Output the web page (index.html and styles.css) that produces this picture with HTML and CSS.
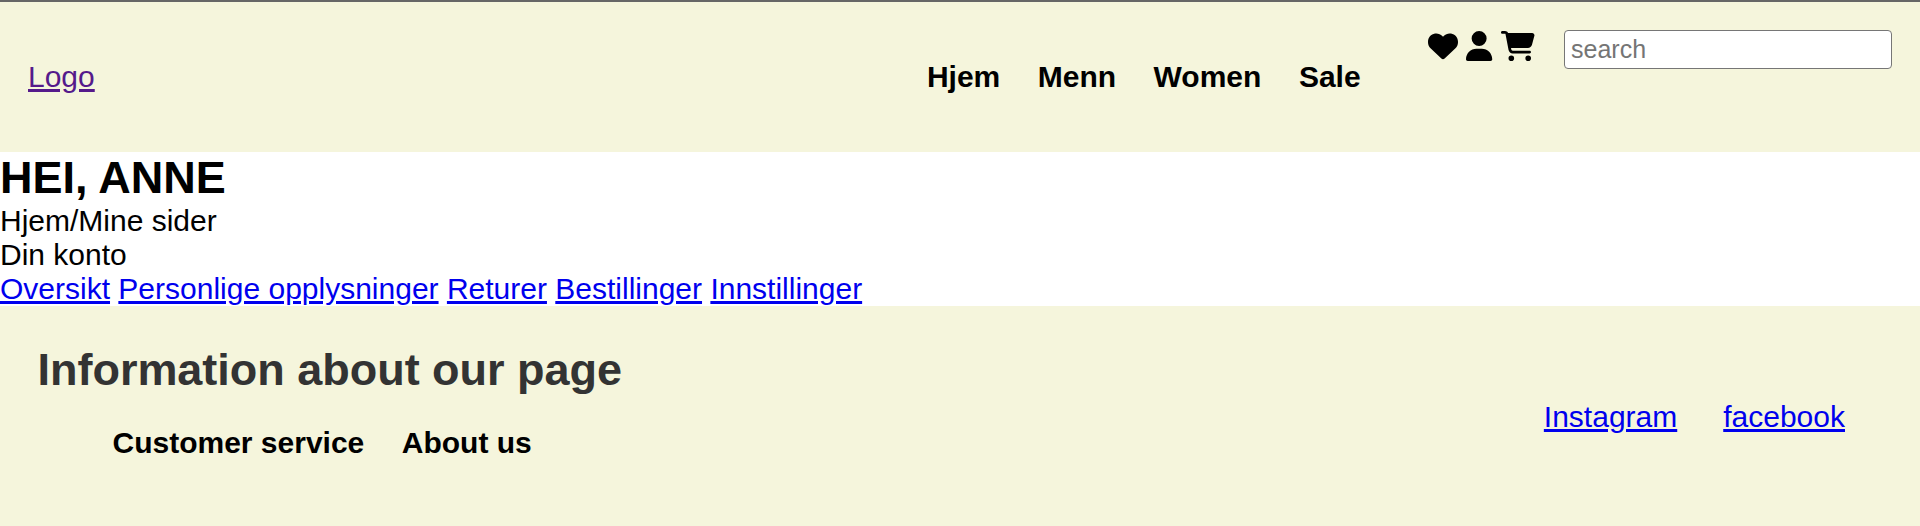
FILE: index.html
```html
<!DOCTYPE html>
<html lang="no">
<head>
<meta charset="utf-8">
<title>Mine sider</title>
<link rel="stylesheet" href="styles.css">
</head>
<body>
<header class="header">
  <a class="logo" href="#">Logo</a>
  <nav class="menu"><a>Hjem</a><a>Menn</a><a>Women</a><a>Sale</a></nav>
  <div class="icons">
    <svg width="30" height="30" viewBox="0 0 512 512"><path d="M47.600 300.400L228.300 469.100c7.500 7 17.400 10.900 27.700 10.900s20.200-3.900 27.700-10.900L464.400 300.400c30.400-28.300 47.600-68 47.600-109.500v-5.800c0-69.900-50.500-129.500-119.400-141C347 36.500 300.600 51.400 268 84L256 96 244 84c-32.600-32.600-79-47.500-124.600-39.900C50.500 55.600 0 115.200 0 185.100v5.800c0 41.500 17.200 81.200 47.600 109.500z"/></svg>
    <svg width="26.250" height="30" viewBox="0 0 448 512"><path d="M224 256A128 128 0 1 0 224 0a128 128 0 1 0 0 256zm-45.700 48C79.800 304 0 383.800 0 482.300 0 498.700 13.300 512 29.700 512h388.600c16.400 0 29.700-13.300 29.700-29.700C448 383.800 368.200 304 269.700 304h-91.400z"/></svg>
    <svg width="33.750" height="30" viewBox="0 0 576 512"><path d="M0 24C0 10.700 10.700 0 24 0h45.500c22 0 41.500 12.800 50.600 32h411c26.300 0 45.500 25 38.600 50.400l-41 152.300c-8.500 31.400-37 53.300-69.500 53.300H170.700l5.400 28.500c2.200 11.300 12.100 19.500 23.600 19.500H488c13.300 0 24 10.700 24 24s-10.700 24-24 24H199.700c-34.600 0-64.300-24.600-70.700-58.500L77.400 54.500C76.700 50.700 73.400 48 69.500 48H24C10.700 48 0 37.300 0 24zm128 440a48 48 0 1 1 96 0 48 48 0 1 1-96 0zm336-48a48 48 0 1 1 0 96 48 48 0 1 1 0-96z"/></svg>
  </div>
  <input class="search" type="text" placeholder="search">
</header>
<main class="account">
  <h1 class="greeting">HEI, ANNE</h1>
  <p>Hjem/Mine sider</p>
  <p>Din konto</p>
  <nav><a href="#">Oversikt</a> <a href="#">Personlige opplysninger</a> <a href="#">Returer</a> <a href="#">Bestillinger</a> <a href="#">Innstillinger</a></nav>
</main>
<footer class="footer">
  <div>
    <h2 class="footer-title">Information about our page</h2>
    <nav class="footer-nav"><a>Customer service</a><a>About us</a></nav>
  </div>
  <div class="social"><a href="#">Instagram</a><a href="#">facebook</a></div>
</footer>
</body>
</html>
```
FILE: styles.css
```css
* { box-sizing: border-box; margin: 0; padding: 0; }
body { font-family: "Liberation Sans", Arial, sans-serif; font-size: 30px; line-height: 34px; color: #000; }
a { text-decoration-thickness: 3px; text-underline-offset: 2px; }
.header { display: flex; height: 152px; padding: 0 28px; border-top: 2px solid #666; background: beige; }
.logo { margin-top: 58px; color: #551a8b; }
.menu { display: flex; gap: 37.5px; margin: 58px 0 0 auto; font-weight: bold; }
.icons { display: flex; gap: 8.33px; margin: 29px 29.25px 0 67.5px; }
.search { width: 328px; height: 39px; margin-top: 28px; padding: 1px 6px; border: 1px solid #767676; border-radius: 4px; font: 25px "Liberation Sans", Arial, sans-serif; }
.search::placeholder { color: #757575; }
.account { height: 154px; background: #fff; }
.account a, .social a { color: #0000ee; }
.greeting { font-size: 45px; line-height: 52px; }
.footer { display: flex; justify-content: space-between; height: 220px; padding: 38px 75px 0 37.5px; background: beige; }
.footer-title { font-size: 45px; line-height: 52px; letter-spacing: -0.02px; color: #333; }
.footer-nav { display: flex; gap: 37.5px; margin: 30px 0 0 75px; font-weight: bold; }
.social { display: flex; gap: 46px; margin-top: 56px; }
```
